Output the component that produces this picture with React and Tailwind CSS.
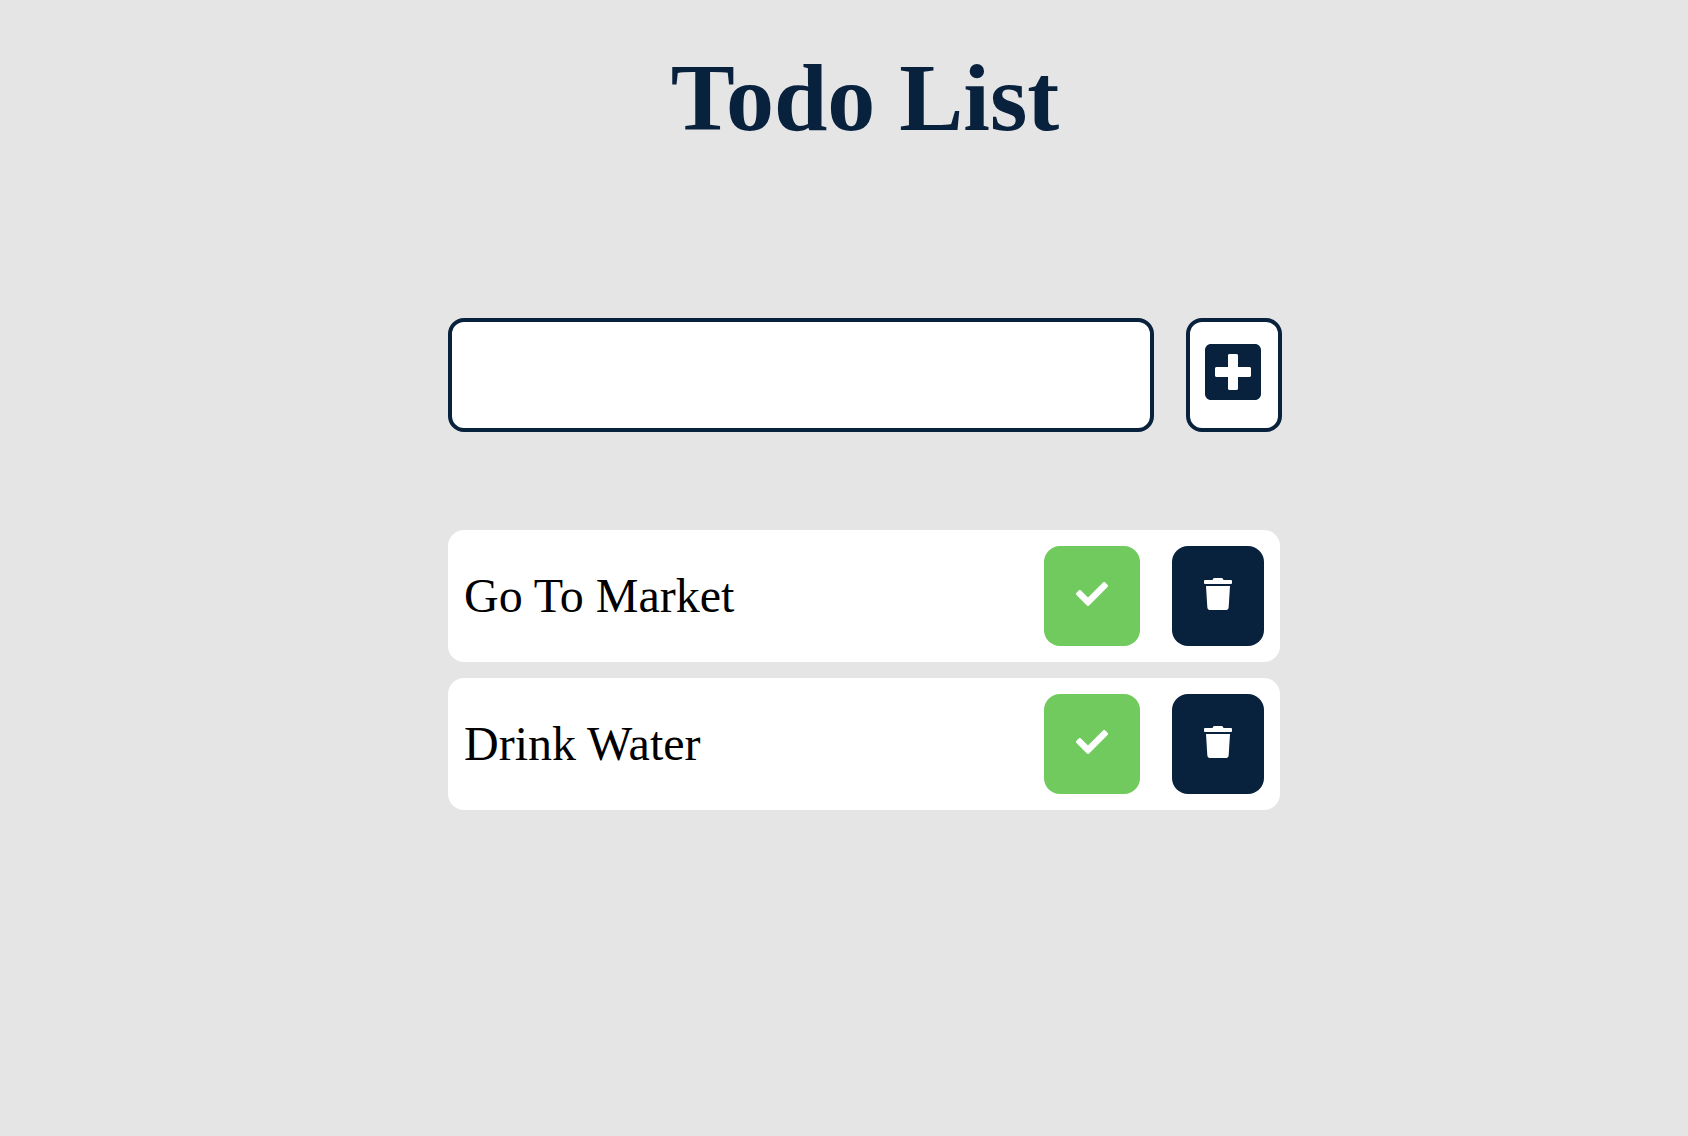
import { useState } from "react";
import { FaCheck, FaPlusSquare, FaTrash } from "react-icons/fa";

const initialTodos = [
  { id: 1, text: "Go To Market" },
  { id: 2, text: "Drink Water" },
];

function TodoItem({ text, onDone, onDelete }) {
  return (
    <li className="flex items-center gap-8 rounded-2xl bg-white p-4">
      <span className="grow text-5xl leading-[50px] text-black">{text}</span>
      <button
        type="button"
        aria-label={`Complete ${text}`}
        onClick={onDone}
        className="flex h-25 w-24 shrink-0 items-center justify-center rounded-2xl bg-[#70ca5d] pb-1 text-[32px] text-white"
      >
        <FaCheck />
      </button>
      <button
        type="button"
        aria-label={`Delete ${text}`}
        onClick={onDelete}
        className="flex h-25 w-23 shrink-0 items-center justify-center rounded-2xl bg-[#08213d] pb-1 text-[32px] text-white"
      >
        <FaTrash />
      </button>
    </li>
  );
}

export default function App() {
  const [todos, setTodos] = useState(initialTodos);
  const [draft, setDraft] = useState("");

  const remove = (id) => setTodos(todos.filter((todo) => todo.id !== id));

  const add = (event) => {
    event.preventDefault();
    if (!draft.trim()) return;
    setTodos([...todos, { id: Date.now(), text: draft.trim() }]);
    setDraft("");
  };

  return (
    <div className="min-h-screen bg-[#e5e5e5] pt-12 pl-[42px] font-['Liberation_Serif',serif]">
      <main className="mx-auto w-full max-w-[834px]">
        <h1 className="text-center text-8xl leading-[100px] font-bold text-[#08213d]">Todo List</h1>

        <form onSubmit={add} className="mt-[170px] flex gap-8">
          <input
            type="text"
            aria-label="New todo"
            value={draft}
            onChange={(event) => setDraft(event.target.value)}
            className="h-[114px] min-w-0 grow rounded-2xl border-4 border-[#08213d] bg-white px-4 text-5xl text-black outline-none"
          />
          <button
            type="submit"
            aria-label="Add todo"
            className="flex w-24 shrink-0 items-center justify-center rounded-2xl border-4 border-[#08213d] bg-white pr-0.5 pb-1.5 text-[64px] text-[#08213d]"
          >
            <FaPlusSquare />
          </button>
        </form>

        <ul className="mt-[98px] mr-0.5 flex flex-col gap-4">
          {todos.map((todo) => (
            <TodoItem
              key={todo.id}
              text={todo.text}
              onDone={() => remove(todo.id)}
              onDelete={() => remove(todo.id)}
            />
          ))}
        </ul>
      </main>
    </div>
  );
}
